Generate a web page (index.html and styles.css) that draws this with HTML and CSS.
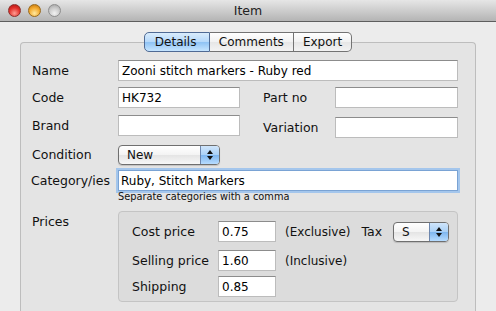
FILE: index.html
```html
<!DOCTYPE html>
<html lang="en">
<head>
    <meta charset="UTF-8">
    <title>Item</title>
    <link rel="stylesheet" href="styles.css">
</head>
<body>
    <div class="window">
        <div class="titlebar">
            <div class="lights">
                <span class="light red"></span>
                <span class="light amber"></span>
                <span class="light off"></span>
            </div>
            <div class="title">Item</div>
        </div>

        <div class="content">
            <div class="tabview">
                <div class="tabs">
                    <span class="tab selected">Details</span>
                    <span class="tab">Comments</span>
                    <span class="tab">Export</span>
                </div>

                <div class="form">
                    <div class="row row-name">
                        <label class="lbl">Name</label>
                        <div class="field wide">Zooni stitch markers - Ruby red</div>
                    </div>
                    <div class="row row-code">
                        <label class="lbl">Code</label>
                        <div class="field half">HK732</div>
                        <label class="lbl lbl2">Part no</label>
                        <div class="field half2"></div>
                    </div>
                    <div class="row row-brand">
                        <label class="lbl">Brand</label>
                        <div class="field half"></div>
                        <label class="lbl lbl2 low">Variation</label>
                        <div class="field half2 low"></div>
                    </div>
                    <div class="row row-cond">
                        <label class="lbl lbl-pop">Condition</label>
                        <div class="popup cond">
                            <span class="popup-text">New</span>
                            <span class="popup-arrows"><span class="up"></span><span class="down"></span></span>
                        </div>
                    </div>
                    <div class="row row-cat">
                        <label class="lbl">Category/ies</label>
                        <div class="field wide focus">Ruby, Stitch Markers</div>
                    </div>
                    <div class="hint">Separate categories with a comma</div>

                    <div class="row row-prices">
                        <label class="lbl">Prices</label>
                        <div class="pricebox">
                            <div class="prow">
                                <label class="plbl">Cost price</label>
                                <div class="field num">0.75</div>
                                <span class="note">(Exclusive)</span>
                                <span class="tax">Tax</span>
                                <div class="popup taxpop">
                                    <span class="popup-text">S</span>
                                    <span class="popup-arrows"><span class="up"></span><span class="down"></span></span>
                                </div>
                            </div>
                            <div class="prow">
                                <label class="plbl">Selling price</label>
                                <div class="field num">1.60</div>
                                <span class="note">(Inclusive)</span>
                            </div>
                            <div class="prow">
                                <label class="plbl">Shipping</label>
                                <div class="field num">0.85</div>
                            </div>
                        </div>
                    </div>
                </div>
            </div>
        </div>
    </div>
</body>
</html>
```

FILE: styles.css
```css
body {
    margin: 0;
    font-family: "DejaVu Sans", sans-serif;
    font-size: 12px;
    color: #111;
    background-color: #ececec;
    overflow: hidden;
}
.window {
    width: 496px;
    height: 311px;
    overflow: hidden;
    background-color: #ececec;
}
.titlebar {
    height: 21px;
    border-bottom: 1px solid #5e5e5e;
    background: linear-gradient(#e6e6e6, #b4b4b4);
    display: flex;
    align-items: center;
    position: relative;
}
.lights {
    display: flex;
    gap: 7px;
    padding-left: 8px;
}
.light {
    width: 13px;
    height: 13px;
    border-radius: 50%;
    box-sizing: border-box;
}
.light.red {
    background: radial-gradient(circle at 50% 75%, #ff9d93 0, #e2302a 55%, #a9120e 100%);
    border: 1px solid #8d2e2a;
}
.light.amber {
    background: radial-gradient(circle at 50% 75%, #ffe9a0 0, #f3a92c 55%, #b96c0b 100%);
    border: 1px solid #9a6a1a;
}
.light.off {
    background: radial-gradient(circle at 50% 75%, #f2f2f2 0, #c9c9c9 55%, #9c9c9c 100%);
    border: 1px solid #8e8e8e;
}
.title {
    position: absolute;
    left: 0;
    right: 0;
    text-align: center;
    font-size: 12.5px;
    color: #222;
}
.content {
    padding: 20px 20px 0 20px;
}
.tabview {
    background-color: #e4e4e4;
    border: 1px solid #bdbdbd;
    border-bottom: none;
    border-radius: 4px 4px 0 0;
    height: 280px;
}
.tabs {
    display: flex;
    justify-content: center;
    margin-top: -11px;
}
.tab {
    height: 18px;
    line-height: 18px;
    padding: 0 9px;
    border: 1px solid #737373;
    border-left: none;
    background: linear-gradient(#ffffff, #f1f1f1 50%, #e6e6e6 51%, #f3f3f3);
    font-size: 12px;
    color: #111;
}
.tab:first-child {
    border-left: 1px solid #5f6f8a;
    border-radius: 5px 0 0 5px;
}
.tab:last-child {
    border-radius: 0 5px 5px 0;
}
.tab.selected {
    width: 44px;
    padding: 0 10px;
    background: linear-gradient(#d9ecfc, #b5d8fa 50%, #8ec2f4 51%, #c6e5ff);
    border-color: #4f6a94;
}
.form {
    padding: 8px 0 0 11px;
}
.row {
    display: flex;
    align-items: flex-start;
}
.row-name {
    height: 27px;
}
.row-code {
    height: 28px;
}
.row-brand {
    height: 30px;
}
.row-cond {
    height: 24px;
}
.row-cat {
    height: 22px;
}
.lbl {
    width: 86px;
    flex-shrink: 0;
    line-height: 21px;
    font-size: 12.5px;
}
.lbl2 {
    width: 72px;
    margin-left: 23px;
}
.lbl-pop {
    line-height: 20px;
}
.field {
    height: 21px;
    line-height: 21px;
    box-sizing: border-box;
    background-color: #fff;
    border: 1px solid #bcbcbc;
    border-top-color: #8c8c8c;
    padding: 0 3px;
    font-size: 12px;
    color: #000;
}
.wide {
    width: 340px;
}
.half {
    width: 122px;
}
.half2 {
    width: 123px;
}
.low {
    position: relative;
    top: 2px;
}
.popup {
    display: flex;
    height: 20px;
    box-sizing: border-box;
    border: 1px solid #6f6f6f;
    border-radius: 4px;
    background: linear-gradient(#ffffff, #f3f3f3 50%, #e4e4e4 51%, #f7f7f7);
    overflow: hidden;
    box-shadow: 0 1px 1px rgba(0, 0, 0, 0.15);
}
.popup-text {
    flex: 1;
    padding-left: 8px;
    line-height: 18px;
    font-size: 12px;
}
.popup-arrows {
    width: 18px;
    border-left: 1px solid #6d86ad;
    background: linear-gradient(#cfe5fb, #a9d0f6 50%, #7eb6ef 51%, #b7dcff);
    display: flex;
    flex-direction: column;
    align-items: center;
    justify-content: center;
    gap: 2px;
}
.up {
    border-left: 3px solid transparent;
    border-right: 3px solid transparent;
    border-bottom: 4px solid #111;
}
.down {
    border-left: 3px solid transparent;
    border-right: 3px solid transparent;
    border-top: 4px solid #111;
}
.cond {
    width: 102px;
}
.focus {
    margin-top: 1px;
    height: 21px;
    border: 1px solid #7aa3d4;
    box-shadow: 0 0 0 2px #a4c6ec;
    padding-left: 2px;
}
.row-cat .lbl {
    margin-left: -1px;
    width: 87px;
    line-height: 23px;
}
.hint {
    margin: 0 0 8px 86px;
    height: 12px;
    line-height: 12px;
    font-size: 9.8px;
    color: #111;
}
.pricebox {
    width: 340px;
    height: 91px;
    box-sizing: border-box;
    border: 1px solid #c4c4c4;
    border-radius: 4px;
    background-color: #dcdcdc;
    padding: 9px 0 0 13px;
}
.prow {
    display: flex;
    align-items: center;
    height: 21px;
    margin-bottom: 8px;
}
.prow:nth-child(2) {
    margin-bottom: 5px;
}
.prow:last-child {
    margin-bottom: 0;
}
.plbl {
    width: 86px;
    font-size: 12.5px;
}
.num {
    width: 58px;
}
.note {
    margin-left: 9px;
    font-size: 12px;
}
.tax {
    margin-left: 11px;
    font-size: 12.5px;
}
.taxpop {
    width: 56px;
    margin-left: 11px;
}
```
